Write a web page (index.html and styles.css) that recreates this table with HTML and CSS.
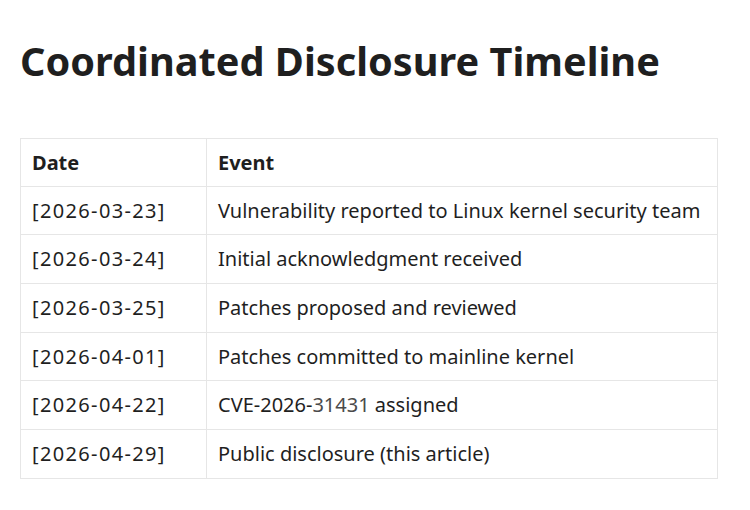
FILE: index.html
```html
<!DOCTYPE html>
<html lang="en">
<head>
<meta charset="utf-8">
<title>Coordinated Disclosure Timeline</title>
<link rel="stylesheet" href="styles.css">
</head>
<body>
<main class="page">
  <h1 class="title">Coordinated Disclosure Timeline</h1>
  <table class="timeline">
    <thead>
      <tr><th class="col-date">Date</th><th class="col-event">Event</th></tr>
    </thead>
    <tbody>
      <tr><td class="date">[2026-03-23]</td><td>Vulnerability reported to Linux kernel security team</td></tr>
      <tr><td class="date">[2026-03-24]</td><td>Initial acknowledgment received</td></tr>
      <tr><td class="date">[2026-03-25]</td><td>Patches proposed and reviewed</td></tr>
      <tr><td class="date">[2026-04-01]</td><td>Patches committed to mainline kernel</td></tr>
      <tr><td class="date">[2026-04-22]</td><td>CVE-2026-<span class="num">31431</span> assigned</td></tr>
      <tr><td class="date">[2026-04-29]</td><td>Public disclosure (this article)</td></tr>
    </tbody>
  </table>
</main>
</body>
</html>
```
FILE: styles.css
```css
html, body {
  margin: 0;
  padding: 0;
  background: #ffffff;
}
body {
  font-family: "Noto Sans", "Liberation Sans", sans-serif;
  color: #1f1f1f;
}
.page {
  padding: 20px 20px;
}
.title {
  margin: 15px 0 51px;
  font-size: 39.7px;
  line-height: 52px;
  font-weight: 700;
  letter-spacing: 0;
  color: #1f1f1f;
}
.timeline {
  border-collapse: collapse;
  font-size: 20px;
  line-height: 27.67px;
  width: 698px;
}
.col-date {
  width: 163px;
}
.timeline th,
.timeline td {
  border: 1px solid #e6e6e6;
  padding: 10px 11px;
  text-align: left;
  vertical-align: middle;
}
.timeline th {
  font-weight: 700;
  padding-top: 10px;
  padding-bottom: 9px;
}
.timeline td {
  font-weight: 400;
  padding-top: 10px;
  padding-bottom: 10px;
}
.date {
  letter-spacing: 1.35px;
}
.num {
  color: #4a4a4a;
}
```
